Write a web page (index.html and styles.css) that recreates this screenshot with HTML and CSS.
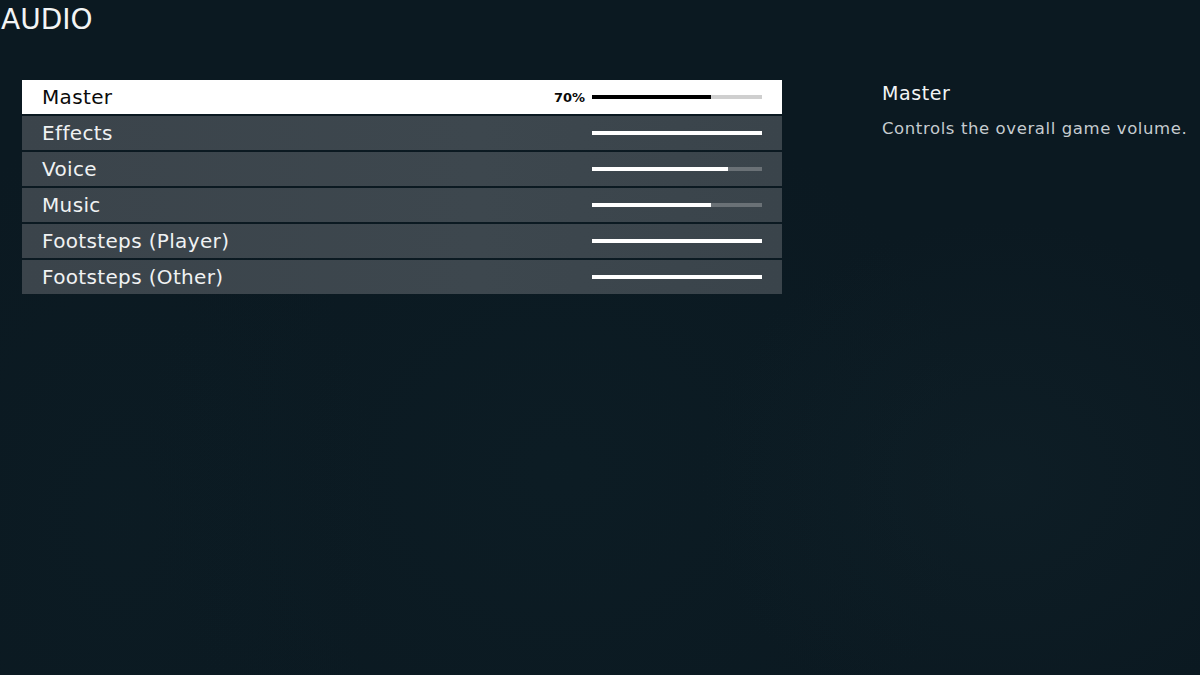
FILE: index.html
```html
<!DOCTYPE html>
<html>
<head>
<meta charset="utf-8">
<link rel="stylesheet" href="styles.css">
</head>
<body>
<div class="page">
  <h1 class="title">AUDIO</h1>
  <div class="content">
    <div class="list">
      <div class="row active">
        <span class="label">Master</span>
        <span class="value">70%</span>
        <div class="track"><div class="fill" style="width:70%"></div></div>
      </div>
      <div class="row">
        <span class="label">Effects</span>
        <div class="track"><div class="fill" style="width:100%"></div></div>
      </div>
      <div class="row">
        <span class="label">Voice</span>
        <div class="track"><div class="fill" style="width:80%"></div></div>
      </div>
      <div class="row">
        <span class="label">Music</span>
        <div class="track"><div class="fill" style="width:70%"></div></div>
      </div>
      <div class="row">
        <span class="label">Footsteps (Player)</span>
        <div class="track"><div class="fill" style="width:100%"></div></div>
      </div>
      <div class="row">
        <span class="label">Footsteps (Other)</span>
        <div class="track"><div class="fill" style="width:100%"></div></div>
      </div>
    </div>
    <div class="info">
      <div class="info-title">Master</div>
      <div class="info-desc">Controls the overall game volume.</div>
    </div>
  </div>
</div>
</body>
</html>
```
FILE: styles.css
```css
html, body {
  margin: 0;
  padding: 0;
  height: 100%;
}
body {
  background-color: #0b1921;
  background-image:
    radial-gradient(ellipse 300px 260px at 1000px 480px, rgba(20,40,48,0.3), rgba(20,40,48,0) 100%),
    radial-gradient(ellipse 420px 380px at 560px 470px, rgba(14,34,42,0.35), rgba(14,34,42,0) 100%),
    radial-gradient(ellipse 260px 400px at 120px 520px, rgba(14,34,42,0.25), rgba(14,34,42,0) 100%);
  font-family: "DejaVu Sans", "Noto Sans", sans-serif;
  color: #ffffff;
  overflow: hidden;
}
.page {
  width: 1200px;
  height: 675px;
  position: relative;
}
.title {
  margin: 0;
  padding: 4px 0 0 1px;
  font-size: 28px;
  font-weight: normal;
  line-height: 32px;
  color: #f2f4f5;
}
.content {
  display: flex;
  margin-top: 44px;
  padding-left: 22px;
}
.list {
  width: 760px;
  display: flex;
  flex-direction: column;
  gap: 2px;
}
.row {
  height: 34px;
  display: flex;
  align-items: center;
  padding: 0 20px 0 20px;
  background: linear-gradient(90deg, #3b444b, #3d474e 60%, #3a444b);
  color: #f0f2f3;
}
.row.active {
  background: #ffffff;
  color: #0a0a0a;
}
.label {
  flex: 1;
  font-size: 20px;
  line-height: 34px;
  letter-spacing: 0.35px;
}
.value {
  font-size: 13px;
  font-weight: bold;
  margin-right: 7px;
}
.track {
  width: 170px;
  height: 4px;
  background: #6a7176;
}
.row.active .track {
  background: #cfcfcf;
}
.fill {
  height: 100%;
  background: #ffffff;
}
.row.active .fill {
  background: #000000;
}
.info {
  margin-left: 100px;
}
.info-title {
  font-size: 19px;
  line-height: 26px;
  letter-spacing: 0.6px;
  color: #f2f4f5;
}
.info-desc {
  margin-top: 12px;
  font-size: 16.5px;
  line-height: 22px;
  letter-spacing: 0.6px;
  color: #c6ccd0;
}
```
